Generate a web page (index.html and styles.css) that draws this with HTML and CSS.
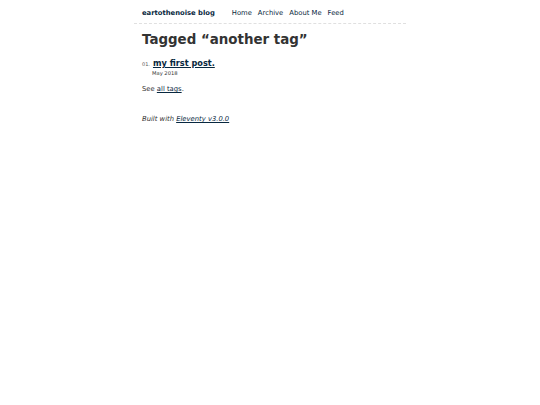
FILE: index.html
```html
<!DOCTYPE html>
<html lang="en">
<head>
    <meta charset="UTF-8">
    <meta name="viewport" content="width=device-width, initial-scale=1.0">
    <title>Tagged “another tag” - eartothenoise blog</title>
    <link rel="stylesheet" href="styles.css">
</head>
<body>
    <header class="site-header">
        <a href="/" class="home-link">eartothenoise blog</a>
        <nav>
            <ul class="nav">
                <li class="nav-item"><a href="/">Home</a></li>
                <li class="nav-item"><a href="/blog/">Archive</a></li>
                <li class="nav-item"><a href="/about/">About Me</a></li>
                <li class="nav-item"><a href="/feed/feed.xml">Feed</a></li>
            </ul>
        </nav>
    </header>

    <main class="content">
        <h1>Tagged “another tag”</h1>
        <ol class="postlist">
            <li class="postlist-item">
                <span class="postlist-num">01.</span>
                <a href="/blog/firstpost/" class="postlist-link">my first post.</a>
                <time class="postlist-date" datetime="2018-05-01">May 2018</time>
            </li>
        </ol>
        <p class="see-all">See <a href="/tags/">all tags</a>.</p>
    </main>

    <footer class="site-footer">
        <p><em>Built with <a href="https://www.11ty.dev/">Eleventy v3.0.0</a></em></p>
    </footer>
</body>
</html>
```

FILE: styles.css
```css
body {
    font-family: "DejaVu Sans", Verdana, sans-serif;
    font-size: 6.8px;
    color: #333;
    background-color: #fff;
    margin: 0 auto;
    padding: 0 6px;
    max-width: 272px;
}

a {
    color: #082840;
}

.site-header {
    display: flex;
    align-items: center;
    gap: 17px;
    padding: 9px 8px 6px;
    border-bottom: 1px dashed #e0e0e0;
}

.home-link {
    font-weight: bold;
    text-decoration: none;
    color: #082840;
}

.nav {
    display: flex;
    gap: 6px;
    margin: 0;
    padding: 0;
    list-style: none;
}

.nav-item a {
    color: #082840;
    text-decoration: none;
}

.content {
    padding: 0 8px;
}

h1 {
    font-size: 13.4px;
    margin: 8px 0 11px;
    line-height: 1.2;
}

.postlist {
    margin: 0;
    padding: 0;
    list-style: none;
}

.postlist-item {
    display: flex;
    flex-wrap: wrap;
    align-items: baseline;
    line-height: 1.2;
}

.postlist-num {
    font-size: 5px;
    color: #555;
    margin-right: 3px;
}

.postlist-link {
    font-size: 8.2px;
    font-weight: bold;
    text-underline-offset: 1px;
}

.postlist-date {
    flex-basis: 100%;
    padding-left: 10px;
    font-size: 5.2px;
    color: #333;
    margin-top: 1px;
}

.see-all {
    margin: 9px 0;
}

.site-footer {
    padding: 13px 8px;
}

.site-footer p {
    margin: 0;
}
```
